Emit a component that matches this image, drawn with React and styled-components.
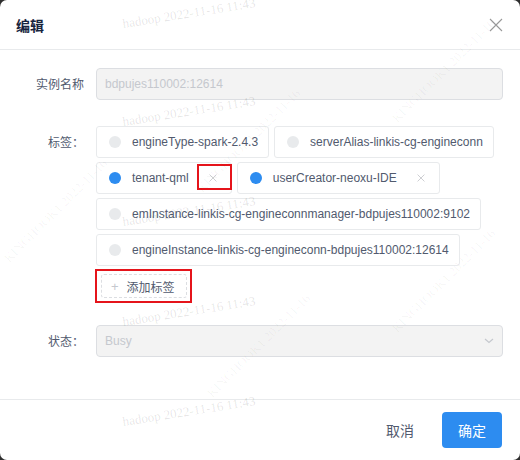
import { styled, createGlobalStyle } from 'styled-components';

const GlobalStyle = createGlobalStyle`
  html, body {
    margin: 0;
    padding: 0;
    background: #2f2f2f;
  }
  body {
    font-family: "Liberation Sans", "Noto Sans CJK SC", sans-serif;
    -webkit-font-smoothing: antialiased;
  }
`;

const Modal = styled.div`
  position: relative;
  width: 520px;
  height: 460px;
  background: #fff;
  border-radius: 7px;
  overflow: hidden;
  display: flex;
  flex-direction: column;
`;

const Header = styled.div`
  height: 50px;
  box-sizing: border-box;
  padding: 0 17px 0 16px;
  display: flex;
  align-items: center;
  justify-content: space-between;
  border-bottom: 1px solid #e8eaec;
`;

const Title = styled.div`
  font-family: "Noto Sans CJK SC", sans-serif;
  font-size: 14px;
  font-weight: 700;
  color: #17233d;
`;

const CloseButton = styled.button`
  border: 0;
  background: none;
  padding: 0;
  width: 14px;
  height: 14px;
  display: flex;
  cursor: pointer;
`;

const Body = styled.div`
  flex: 1;
  padding: 18px 17px 0 16px;
`;

const FormItem = styled.div`
  display: flex;
  margin-bottom: ${({ $gap }) => $gap}px;
`;

const Label = styled.div`
  width: 80px;
  flex: none;
  box-sizing: border-box;
  padding-right: 12px;
  padding-top: ${({ $top }) => $top || 0}px;
  text-align: right;
  font-family: "Noto Sans CJK SC", sans-serif;
  font-size: 12px;
  line-height: 32px;
  color: #515a6e;
`;

const Content = styled.div`
  flex: 1;
  min-width: 0;
`;

const Field = styled.div`
  height: 32px;
  box-sizing: border-box;
  border: 1px solid #dcdee2;
  border-radius: 4px;
  background: #f3f3f3;
  padding: 0 8px;
  display: flex;
  align-items: center;
  justify-content: space-between;
  font-size: 12px;
  color: #c5c8ce;
`;

const TagList = styled.div`
  display: flex;
  flex-wrap: wrap;
`;

const Tag = styled.div`
  position: relative;
  height: 32px;
  box-sizing: border-box;
  margin: 2px 5px 2px 0;
  padding: 0 ${({ $closable }) => ($closable ? 14 : 10)}px 0 12px;
  border: 1px solid #e8eaec;
  border-radius: 3px;
  display: flex;
  align-items: center;
  font-size: 12px;
  color: #515a6e;
  white-space: nowrap;
`;

const Dot = styled.span`
  width: 12px;
  height: 12px;
  border-radius: 50%;
  margin-right: 11px;
  background: ${({ $on }) => ($on ? '#2d8cf0' : '#e8eaec')};
`;

const TagClose = styled.span`
  margin-left: 20px;
  width: 8px;
  height: 8px;
  display: flex;
`;

const Mark = styled.span`
  position: absolute;
  right: -1px;
  top: 1px;
  width: 35px;
  height: 26px;
  box-sizing: border-box;
  border: 2px solid #e5141b;
  pointer-events: none;
`;

const MarkBox = styled.div`
  display: inline-flex;
  margin-top: 1px;
  margin-left: -1px;
  padding: 3px 3px 3px 4px;
  border: 2px solid #e5141b;
`;

const DashedButton = styled.button`
  height: 24px;
  box-sizing: border-box;
  padding: 0 11px 0 9px;
  border: 1px dashed #dcdee2;
  border-radius: 3px;
  background: #fff;
  display: flex;
  align-items: center;
  gap: 8px;
  font-family: "Noto Sans CJK SC", sans-serif;
  font-size: 12px;
  color: #515a6e;
  cursor: pointer;
`;

const Plus = styled.span`
  font-family: "Liberation Sans", sans-serif;
  font-size: 13px;
  color: #c5c8ce;
`;

const Footer = styled.div`
  height: 61px;
  box-sizing: border-box;
  border-top: 1px solid #e8eaec;
  padding: 12px 18px 12px;
  display: flex;
  justify-content: flex-end;
  gap: 12px;
`;

const Button = styled.button`
  height: 36px;
  width: 60px;
  border: 0;
  border-radius: 4px;
  font-family: "Noto Sans CJK SC", sans-serif;
  font-size: 14px;
  cursor: pointer;
  background: ${({ $primary }) => ($primary ? '#2d8cf0' : 'transparent')};
  color: ${({ $primary }) => ($primary ? '#fff' : '#515a6e')};
`;

const Watermarks = styled.div`
  position: absolute;
  inset: 0;
  pointer-events: none;
  overflow: hidden;
`;

const WaterText = styled.span`
  position: absolute;
  white-space: nowrap;
  font-family: "Liberation Serif", serif;
  font-size: 13px;
  color: rgba(0, 0, 0, ${({ $faint }) => ($faint ? 0.045 : 0.11)});
  transform-origin: left bottom;
  transform: rotate(${({ $angle }) => $angle}deg);
`;

const tags = [
  { text: 'engineType-spark-2.4.3' },
  { text: 'serverAlias-linkis-cg-engineconn' },
  { text: 'tenant-qml', on: true, closable: true, marked: true },
  { text: 'userCreator-neoxu-IDE', on: true, closable: true },
  { text: 'emInstance-linkis-cg-engineconnmanager-bdpujes110002:9102' },
  { text: 'engineInstance-linkis-cg-engineconn-bdpujes110002:12614' },
];

const stamp = 'hadoop  2022-11-16  11:43';
const marks = [
  { x: 124, y: 16, a: -9, t: stamp },
  { x: 124, y: 114, a: -9, t: stamp },
  { x: 124, y: 214, a: -9, t: stamp },
  { x: 124, y: 314, a: -9, t: stamp },
  { x: 124, y: 414, a: -9, t: stamp },
  { x: 12, y: 250, a: -45, t: 'KINGHOOK1  2022-11-16', faint: true },
  { x: 205, y: 180, a: -45, t: 'KINGHOOK1  2022-11-16', faint: true },
  { x: 215, y: 385, a: -45, t: 'KINGHOOK1  2022-11-16', faint: true },
  { x: 400, y: 110, a: -45, t: 'KINGHOOK1  2022-11-16', faint: true },
  { x: 400, y: 320, a: -45, t: 'KINGHOOK1  2022-11-16', faint: true },
];

function CrossIcon({ size, color, width = 1 }) {
  return (
    <svg width={size} height={size} viewBox="0 0 14 14">
      <path d="M1 1L13 13M13 1L1 13" stroke={color} strokeWidth={width} fill="none" />
    </svg>
  );
}

export default function App() {
  return (
    <>
      <GlobalStyle />
      <Modal>
        <Header>
          <Title>编辑</Title>
          <CloseButton>
            <CrossIcon size={14} color="#999" width={1.1} />
          </CloseButton>
        </Header>

        <Body>
          <FormItem $gap={24}>
            <Label>实例名称</Label>
            <Content>
              <Field>bdpujes110002:12614</Field>
            </Content>
          </FormItem>

          <FormItem $gap={22}>
            <Label $top={2}>标签：</Label>
            <Content>
              <TagList>
                {tags.map((t) => (
                  <Tag key={t.text} $closable={t.closable}>
                    <Dot $on={t.on} />
                    {t.text}
                    {t.closable && (
                      <TagClose>
                        <CrossIcon size={8} color="#a8abb2" />
                      </TagClose>
                    )}
                    {t.marked && <Mark />}
                  </Tag>
                ))}
              </TagList>
              <MarkBox>
                <DashedButton>
                  <Plus>+</Plus>
                  添加标签
                </DashedButton>
              </MarkBox>
            </Content>
          </FormItem>

          <FormItem $gap={0}>
            <Label>状态：</Label>
            <Content>
              <Field>
                Busy
                <svg width="10" height="6" viewBox="0 0 10 6">
                  <path d="M1 1L5 4.5L9 1" stroke="#c5c8ce" strokeWidth="1.2" fill="none" />
                </svg>
              </Field>
            </Content>
          </FormItem>
        </Body>

        <Footer>
          <Button>取消</Button>
          <Button $primary>确定</Button>
        </Footer>

        <Watermarks>
          {marks.map((m, i) => (
            <WaterText key={i} $angle={m.a} $faint={m.faint} style={{ left: m.x, top: m.y }}>
              {m.t}
            </WaterText>
          ))}
        </Watermarks>
      </Modal>
    </>
  );
}
